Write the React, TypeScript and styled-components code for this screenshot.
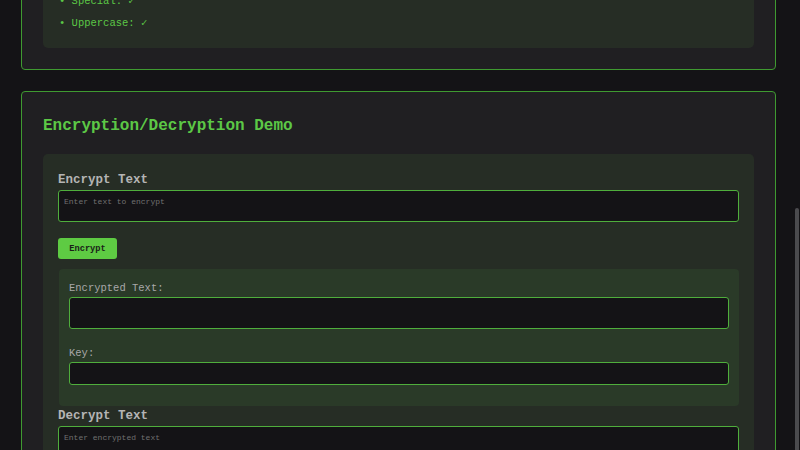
import styled, { createGlobalStyle } from 'styled-components';

const GlobalStyle = createGlobalStyle`
  html, body {
    margin: 0;
    padding: 0;
    background: #141316;
    overflow: hidden;
  }
  body {
    font-family: "Liberation Mono", "DejaVu Sans Mono", monospace;
  }
`;

const checks = ['Length: ✓', 'Number: ✓', 'Special: ✓', 'Uppercase: ✓'];

const App = () => {
  return (
    <>
      <GlobalStyle />
      <Page>
        <Card>
          <Panel $pad="14px 16px">
            <CheckList>
              {checks.map((c) => (
                <CheckItem key={c}>• {c}</CheckItem>
              ))}
            </CheckList>
          </Panel>
        </Card>

        <Card>
          <Title>Encryption/Decryption Demo</Title>
          <Panel $pad="17px 15px 0">
            <SectionLabel>Encrypt Text</SectionLabel>
            <TextBox placeholder="Enter text to encrypt" />
            <Button>Encrypt</Button>
            <Result>
              <FieldLabel>Encrypted Text:</FieldLabel>
              <TextBox readOnly />
              <FieldLabel $gap>Key:</FieldLabel>
              <KeyInput readOnly />
            </Result>
            <SectionLabel $top>Decrypt Text</SectionLabel>
            <TextBox placeholder="Enter encrypted text" />
          </Panel>
        </Card>
      </Page>
      <ScrollThumb />
    </>
  );
};

export default App;

const Page = styled.main`
  display: flex;
  flex-direction: column;
  gap: 21px;
  margin-top: -90px;
  padding: 0 24px 40px 21px;
`;

const Card = styled.section`
  background: #201f22;
  border: 1px solid #3f9a31;
  border-radius: 4px;
  padding: 21px;
`;

const Title = styled.h2`
  margin: 3px 0 18px;
  font-size: 16px;
  line-height: 20px;
  font-weight: bold;
  color: #5cc846;
`;

const Panel = styled.div<{ $pad: string }>`
  background: #262d25;
  border-radius: 5px;
  padding: ${(p) => p.$pad};
`;

const CheckList = styled.ul`
  list-style: none;
  margin: 0;
  padding: 0;
`;

const CheckItem = styled.li`
  font-size: 10.5px;
  line-height: 22px;
  color: #5cc846;
`;

const SectionLabel = styled.h3<{ $top?: boolean }>`
  margin: ${(p) => (p.$top ? '1px' : '0')} 0 1px;
  font-size: 12.5px;
  line-height: 18px;
  font-weight: bold;
  color: #b4b4b4;
`;

const TextBox = styled.textarea`
  display: block;
  box-sizing: border-box;
  width: 100%;
  height: 32px;
  resize: none;
  margin: 0;
  padding: 5px 5px;
  background: #141316;
  border: 1px solid #4fae3c;
  border-radius: 3px;
  color: #cfcfcf;
  font-family: inherit;
  font-size: 8px;
  line-height: 12px;
  outline: none;

  &::placeholder {
    color: #707070;
  }
`;

const Button = styled.button`
  display: block;
  margin: 16px 0 10px;
  width: 59px;
  height: 21px;
  padding: 0;
  border: none;
  border-radius: 3px;
  background: #5ecb43;
  color: #1a1f18;
  font-family: inherit;
  font-size: 8.7px;
  font-weight: bold;
  cursor: pointer;
`;

const Result = styled.div`
  background: #2a3a28;
  border-radius: 4px;
  margin-left: 1px;
  padding: 12px 10px 21px;
`;

const FieldLabel = styled.label<{ $gap?: boolean }>`
  display: block;
  margin: ${(p) => (p.$gap ? '17px' : '0')} 0 2px;
  font-size: 10.5px;
  line-height: 14px;
  color: #a8a8a8;
`;

const KeyInput = styled.input`
  display: block;
  box-sizing: border-box;
  width: 100%;
  height: 23px;
  margin: 0;
  padding: 0 5px;
  background: #141316;
  border: 1px solid #4fae3c;
  border-radius: 3px;
  color: #cfcfcf;
  font-family: inherit;
  font-size: 8px;
  outline: none;
`;

const ScrollThumb = styled.div`
  position: fixed;
  top: 208px;
  right: 1px;
  width: 4px;
  height: 250px;
  border-radius: 2px;
  background: #4b4b4e;
`;
